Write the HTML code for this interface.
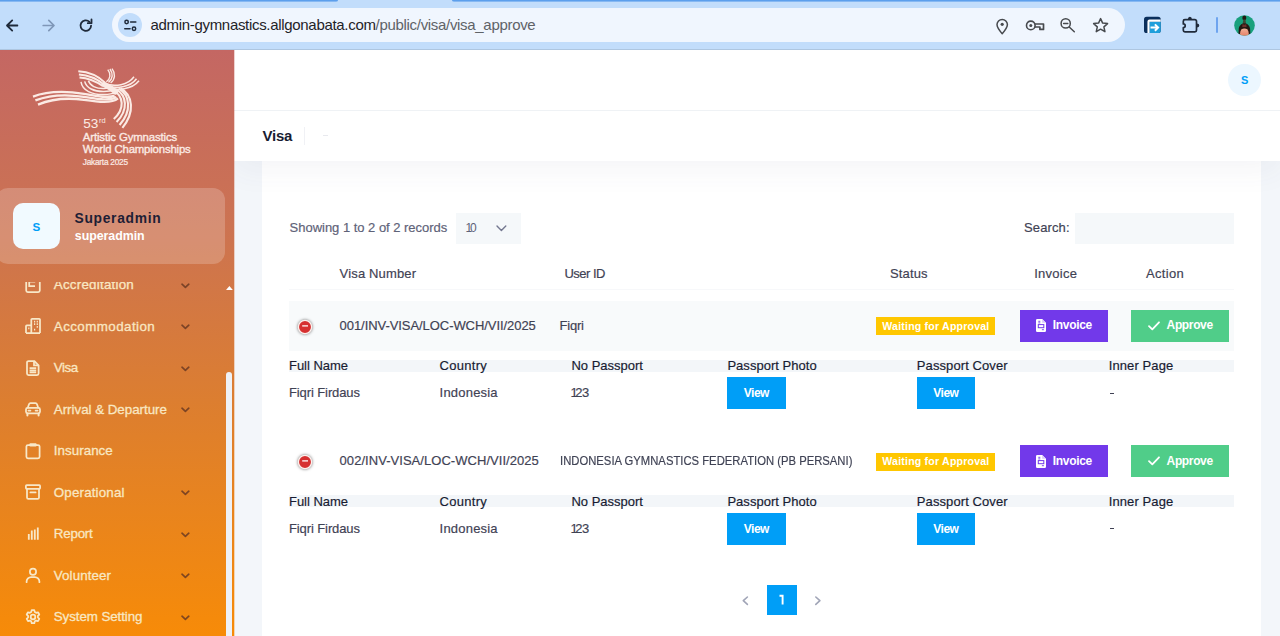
<!DOCTYPE html>
<html lang="en">
<head>
<meta charset="utf-8">
<title>Visa</title>
<style>
html,body{margin:0;padding:0}
body{width:1280px;height:636px;overflow:hidden;position:relative;background:#fff;font-family:"Liberation Sans",sans-serif;color:#181c32}
.a{position:absolute}
.t{position:absolute;white-space:nowrap;line-height:1;font-size:13.4px}
svg{position:absolute;overflow:visible}

/* ---------- browser chrome ---------- */
#chrome{left:0;top:0;width:1280px;height:50px;background:#c2ddfb}
#frameL{left:0;top:0;width:338px;height:2px;background:linear-gradient(180deg,#5c9fec 0,#5c9fec 1px,#86b8f2 1px,#86b8f2 2px);border-radius:0 0 4px 0}
#frameR{left:452px;top:0;width:828px;height:2px;background:linear-gradient(180deg,#5c9fec 0,#5c9fec 1px,#86b8f2 1px,#86b8f2 2px);border-radius:0 0 0 4px}
#chromeline{left:0;top:49px;width:1280px;height:1px;background:#aec6e0}
#pill{left:112.400px;top:8.100px;width:1013px;height:34.400px;border-radius:17.5px;background:#f0f6fe}
#site{left:118px;top:13px;width:24px;height:24px;border-radius:12px;background:#c2ddfb}
#url{left:150.5px;top:17.3px;font-size:15px;color:#1f2328}
#url span{color:#5f6368}
#sep{left:1216px;top:17px;width:2px;height:16px;background:#6ea4ef;border-radius:1px}

/* ---------- sidebar ---------- */
#side{left:0;top:50px;width:234px;height:586px;background:linear-gradient(180deg,#c46763 0%,#cc7352 30%,#dc7e30 60%,#f78b08 100%);overflow:hidden}
#ucard{left:-4px;top:138.200px;width:229.300px;height:75.800px;border-radius:12px;background:rgba(255,255,255,.2)}
#uav{left:13px;top:153.300px;width:47px;height:45.800px;border-radius:10px;background:#f1faff}
.mi{left:53.8px;color:#f9e7c2;font-size:13.4px;-webkit-text-stroke:.3px #f9e7c2}
#sedge{left:234px;top:50px;width:1px;height:586px;background:linear-gradient(180deg,#c46763,#f78b08);opacity:.3;z-index:4}
#thumb{left:226.2px;top:322px;width:5.8px;height:270px;border-radius:3px;background:#eef1f6}

/* ---------- main ---------- */
#header{left:234px;top:50px;width:1046px;height:60px;background:#fff}
#hline{left:234px;top:110px;width:1046px;height:1px;background:#eff2f5}
#tool{left:234px;top:111px;width:1046px;height:50px;background:#fff;box-shadow:0 10px 30px 0 rgba(70,78,105,.055);clip-path:inset(0 0 -60px 0);z-index:2}
#content{left:234px;top:161px;width:1046px;height:475px;background:#f3f6fa}
#card{left:262px;top:161px;width:999px;height:475px;background:#fff}
#hav{left:1228px;top:63.5px;width:32.5px;height:32.5px;border-radius:50%;background:#ecf7ff}
.th{font-size:13px;color:#3f4254}
.td{font-size:13px;color:#3f4254}
.ch{font-size:13px;color:#181c32}
.bb{font-size:12px;font-weight:700;color:#fff}
.bt{font-size:10.6px;font-weight:700;color:#fff}
.badge{width:119px;height:18px;background:#ffc700}
.band{left:289px;width:944.5px;height:12.400px;background:#f3f6f9}
.vbtn{width:58.7px;height:32px;background:#009ef7}
.lg{color:#fbeae4}
.lm{-webkit-text-stroke:.35px #fbeae4}
.n1{margin:0 -2.100px 0 -1px}
#d_num1,#d_num2{letter-spacing:-.4px}
.th,.td,.ch,#showing,#search{-webkit-text-stroke:.18px currentColor}
/*FIT-START*/
#url{letter-spacing:-0.313px}
#l2{letter-spacing:-0.136px}
#l3{letter-spacing:-0.179px}
#l4{letter-spacing:-0.244px}
#u1{letter-spacing:0.696px}
#u2{letter-spacing:-0.048px}
#m1{letter-spacing:0.215px}
#m2{letter-spacing:0.415px}
#m3{letter-spacing:-0.438px}
#m4{letter-spacing:-0.037px}
#m5{letter-spacing:0.023px}
#m6{letter-spacing:0.147px}
#m7{letter-spacing:-0.241px}
#m8{letter-spacing:0.076px}
#m9{letter-spacing:-0.105px}
#title{letter-spacing:-0.198px}
#showing{letter-spacing:-0.022px}
#search{letter-spacing:0.115px}
#h_visa{letter-spacing:0.159px}
#h_user{letter-spacing:-0.510px}
#h_status{letter-spacing:0.168px}
#h_inv{letter-spacing:0.249px}
#h_act{letter-spacing:0.332px}
#r1_no{letter-spacing:-0.063px}
#r1_user{letter-spacing:-0.220px}
#badge1{letter-spacing:0.190px}
#b_inv1{letter-spacing:-0.327px}
#b_app1{letter-spacing:-0.365px}
#c_full1{letter-spacing:-0.031px}
#c_country1{letter-spacing:0.278px}
#c_nopass1{letter-spacing:0.005px}
#c_photo1{letter-spacing:0.031px}
#c_cover1{letter-spacing:0.093px}
#c_inner1{letter-spacing:0.110px}
#d_name1{letter-spacing:-0.104px}
#d_country1{letter-spacing:0.201px}
#b_view1{letter-spacing:-0.514px}
#b_view2{letter-spacing:-0.514px}
#r2_no{letter-spacing:0.044px}
#r2_user{transform:scaleX(0.8674);transform-origin:0 50%}
#badge2{letter-spacing:0.190px}
#b_inv2{letter-spacing:-0.327px}
#b_app2{letter-spacing:-0.365px}
#c_full2{letter-spacing:-0.031px}
#c_country2{letter-spacing:0.278px}
#c_nopass2{letter-spacing:0.005px}
#c_photo2{letter-spacing:0.031px}
#c_cover2{letter-spacing:0.093px}
#c_inner2{letter-spacing:0.110px}
#d_name2{letter-spacing:-0.104px}
#d_country2{letter-spacing:0.201px}
#b_view3{letter-spacing:-0.514px}
#b_view4{letter-spacing:-0.514px}
/*FIT-END*/
</style>
</head>
<body>

<!-- browser chrome -->
<div id="chrome" class="a"></div>
<div id="frameL" class="a"></div>
<div id="frameR" class="a"></div>
<div id="chromeline" class="a"></div>
<div id="pill" class="a"></div>
<div id="site" class="a"></div>
<div id="url" class="t">admin-gymnastics.allgonabata.com<span>/public/visa/visa_approve</span></div>
<div id="sep" class="a"></div>
<svg style="left:0;top:0" width="1280" height="50" viewBox="0 0 1280 50" fill="none" stroke-linecap="round" stroke-linejoin="round">
<!-- back -->
<path d="M17.400 25.500H7.400M12.200 20.400 7 25.500l5.200 5.100" stroke="#1f2a3a" stroke-width="1.8"/>
<!-- forward (disabled) -->
<path d="M43.200 25.500h10.200M48.800 20.400l5.200 5.100-5.200 5.100" stroke="#7f97b8" stroke-width="1.700"/>
<!-- reload -->
<path d="M91.100 25.600a5.300 5.300 0 1 1-1.600-3.800" stroke="#1f2a3a" stroke-width="1.800"/>
<path d="M91.500 19.500v3.700h-3.700" stroke="#1f2a3a" stroke-width="1.800"/>
<!-- site settings (tune) -->
<circle cx="126.6" cy="22" r="1.7" stroke="#1f2a3a" stroke-width="1.5"/>
<path d="M130.6 22h5.2" stroke="#1f2a3a" stroke-width="1.6"/>
<circle cx="134" cy="28.8" r="1.7" stroke="#1f2a3a" stroke-width="1.5"/>
<path d="M124.8 28.8h5.2" stroke="#1f2a3a" stroke-width="1.6"/>
<!-- location pin -->
<path d="M1002.2 33.8c-3.4-3.9-5.2-6.6-5.2-9.2a5.2 5.2 0 0 1 10.4 0c0 2.600-1.800 5.300-5.200 9.200z" stroke="#474a4e" stroke-width="1.5"/>
<circle cx="1002.2" cy="24.300" r="1.600" fill="#474a4e" stroke="none"/>
<!-- key -->
<circle cx="1030.800" cy="25.400" r="4.300" stroke="#474a4e" stroke-width="1.600"/>
<circle cx="1030.800" cy="25.400" r="1.500" fill="#474a4e" stroke="none"/>
<path d="M1035.300 24h8.200v5.400h-3.600v-2.400h-4.600" stroke="#474a4e" stroke-width="1.700"/>
<!-- zoom out -->
<circle cx="1065.700" cy="23.400" r="4.600" stroke="#474a4e" stroke-width="1.500"/>
<path d="M1063.600 23.400h4.200M1069.200 27l5.100 4.700" stroke="#474a4e" stroke-width="1.500"/>
<!-- star -->
<path d="M1100.600 18.600l2.050 4.500 4.900.500-3.650 3.300 1.020 4.800-4.320-2.480-4.320 2.480 1.020-4.800-3.650-3.300 4.900-.500z" stroke="#474a4e" stroke-width="1.500"/>
<!-- extension (blue square) -->
<rect x="1144" y="16.800" width="16.700" height="16.300" rx="2.600" fill="#0b2f5c" stroke="none"/>
<path d="M1149.400 33.100V21.500h11.300V30.500a2.600 2.600 0 0 1-2.600 2.600z" fill="#1f9fdb" stroke="none"/>
<path d="M1148.500 33.100V21.600a1 1 0 0 1 1-1h11.200" stroke="#fff" stroke-width="2.100" stroke-linecap="butt"/>
<path d="M1150.500 27.600h7M1154.900 24.400l3.200 3.200-3.200 3.200" stroke="#fff" stroke-width="2" stroke-linecap="butt" stroke-linejoin="miter"/>
<!-- puzzle -->
<path d="M1184.900 19.700H1194.900a1.600 1.600 0 0 1 1.600 1.600V30.300a1.600 1.600 0 0 1-1.600 1.600H1184.900a1.600 1.600 0 0 1-1.600-1.600V27.700a1.900 1.900 0 0 0 0-3.800V21.300a1.600 1.600 0 0 1 1.600-1.600z" stroke="#1f2a3a" stroke-width="1.700"/>
<path d="M1187.900 19.300a2 2.600 0 0 1 4 0zM1196.900 23.600a2.400 2 0 0 1 0 4z" fill="#1f2a3a" stroke="none"/>
</svg>
<!-- profile avatar -->
<svg style="left:1234px;top:15px" width="21" height="21" viewBox="0 0 21 21">
<defs><clipPath id="pc"><circle cx="10.500" cy="10.500" r="10.300"/></clipPath>
<linearGradient id="sk" x1="0" y1="0" x2="0" y2="1"><stop offset="0" stop-color="#f0b39a"/><stop offset="1" stop-color="#e2705a"/></linearGradient></defs>
<circle cx="10.500" cy="10.500" r="10.300" fill="#18a07d"/>
<g clip-path="url(#pc)">
<ellipse cx="10.300" cy="2.900" rx="2" ry="2.300" fill="#231a14"/>
<path d="M9.300 4.600h2.200l.5 3.800h-3.300z" fill="#3b4a36"/>
<path d="M4.800 13.600c.4-2.800 2.400-5.400 5.600-5.400s5.200 2.600 5.600 5.400l.4 5.400H4.400z" fill="#241813"/>
<path d="M8.600 8.800c.8 1.400 2.800 1.400 3.600 0l.4 3.200H8.200z" fill="#6b2f2a"/>
<ellipse cx="10.400" cy="18.200" rx="4.300" ry="5.200" fill="url(#sk)"/>
<path d="M6.300 14.200c1.400-1.800 6.800-1.800 8.200 0c-1.600-.9-6.600-.9-8.200 0z" fill="#2a1a12"/>
</g>
</svg>
<!--CHROME-END-->

<!-- sidebar -->
<div id="side" class="a">
  <div id="ucard" class="a"></div>
  <div id="uav" class="a"></div>
  <svg id="logo" style="left:0;top:0" width="234" height="130" viewBox="0 50 234 130" fill="none" stroke="#fbeae4" stroke-linecap="butt">
<g stroke-width="2.3">
<path d="M33 96.600 C48 90.800 66 91 84 93.800 C97 95.800 108 98.800 114.600 95.600"/>
<path d="M35.400 100.400 C50.500 94.600 66.500 94.200 84 96.900 C97 98.900 109.500 101.400 116.400 97"/>
<path d="M38 104.600 C52 98.800 67 97.400 84 99.900 C98 101.900 111.500 103.800 118 98.400"/>
</g>
<g stroke-width="2">
<path d="M78.300 71.200 C88 71.800 98 75.800 105 82.600"/>
<path d="M78.900 74.400 C88 75 97 78.600 104 84.400"/>
<path d="M79.500 77.600 C87.500 78.100 95.500 81.200 103 86.200"/>
</g>
<g stroke-width="1.500">
<path d="M81 81.800 C82.400 90.600 92 94.800 104 94.600 C109 94.400 113 93.600 115.600 92.400"/>
<path d="M84.700 81.300 C86.200 88 93.900 91.800 104 91.600 C108.400 91.400 112 90.600 114.400 89.600"/>
<path d="M88.400 80.800 C89.900 85.600 96 88.800 104 88.600 C107.600 88.400 110.400 87.700 112.800 86.800"/>
</g>
<g stroke-width="1.400">
<path d="M106.400 81.800 C110.400 78.800 111.200 74 107.800 69.600"/>
<path d="M108.500 82.400 C112.800 79 113.500 73.600 109.900 69"/>
<path d="M110.600 83 C115.200 79.400 115.800 73.400 112 68.600"/>
</g>
<g stroke-width="1.500">
<path d="M105 83.800 C115 86.800 128 85.400 134 76.800"/>
<path d="M105.200 85.700 C116.400 88.900 130.200 87.500 136.500 78.700"/>
<path d="M105.600 87.600 C117.600 90.900 132 89.700 139 80.800"/>
</g>
<path d="M104.600 84.600 C108 86.400 112 88.600 115.400 91.800" stroke-width="5.400" stroke-linecap="round"/>
<g stroke-width="2.100">
<path d="M113.800 90.600 C123.400 96.200 125.200 108.400 113.800 119"/>
<path d="M116.200 89.400 C126.800 95.600 128.600 109.600 116.600 122"/>
<path d="M118.600 88.600 C130.200 95.200 132 111 119.600 125"/>
<path d="M120.400 88.200 C133.200 95 135 112.400 122.400 127.800"/>
</g>
</svg>
  <div id="l1" class="t lg" style="left:83.300px;top:67px;font-size:13.600px">53<span style="font-size:7.400px;position:relative;top:-5.400px;left:.600px">rd</span></div>
  <div id="l2" class="t lg lm" style="left:82.800px;top:81.800px;font-size:11.400px">Artistic Gymnastics</div>
  <div id="l3" class="t lg lm" style="left:82.800px;top:93.800px;font-size:11.400px">World Championships</div>
  <div id="l4" class="t lg" style="left:82.800px;top:108.400px;font-size:8.300px;-webkit-text-stroke:.2px #fbeae4">Jakarta 2025</div>
  <div id="uS" class="t" style="left:32.400px;top:170.900px;font-size:11.600px;font-weight:700;color:#009ef7">S</div>
  <div id="u1" class="t" style="left:74.600px;top:161.500px;font-size:13.800px;font-weight:700;color:#1e1e35">Superadmin</div>
  <div id="u2" class="t" style="left:74.800px;top:180.100px;font-size:12.400px;font-weight:700;color:#fff">superadmin</div>
  <div id="menu" class="a" style="left:0;top:231.6px;width:226px;height:354.4px;overflow:hidden">
  <svg style="left:24.7px;top:-4.6px" width="16" height="16" viewBox="0 0 16 16"><rect x="1.200" y="1" width="13.600" height="14" rx="1.600" fill="none" stroke="#f8e8c8" stroke-width="1.750"/><path d="M4.200 4.700h6M4.200 4.700v4.300h5.800" stroke="#f8e8c8" stroke-width="1.750" fill="none"/></svg>
  <div id="m1" class="t mi" style="top:-3.4px">Accreditation</div>
  <svg style="left:181.4px;top:1.2px" width="9" height="6" viewBox="0 0 9 6"><path d="M1 1.200 L4.400 4.300 L7.800 1.200" fill="none" stroke="#6b3a22" stroke-opacity=".85" stroke-width="1.700" stroke-linecap="round" stroke-linejoin="round"/></svg>
  <svg style="left:24.7px;top:36.9px" width="16" height="16" viewBox="0 0 16 16"><path d="M6.3 15V1.6a.8.8 0 0 1 .8-.8h7.1a.8.8 0 0 1 .8.8V15M1 15V8.2a.8.8 0 0 1 .8-.8h4.5M1 15h14" fill="none" stroke="#f8e8c8" stroke-width="1.750" stroke-linejoin="round"/><path d="M9 3.6h1.2M11.7 3.6h1.2M9 6.2h1.2M11.7 6.2h1.2M11.7 8.8h1.2M3.2 10.4h1.2M9 11.6h1.2" stroke="#f8e8c8" stroke-width="1.750" fill="none"/></svg>
  <div id="m2" class="t mi" style="top:38.1px">Accommodation</div>
  <svg style="left:181.4px;top:42.7px" width="9" height="6" viewBox="0 0 9 6"><path d="M1 1.200 L4.400 4.300 L7.800 1.200" fill="none" stroke="#6b3a22" stroke-opacity=".85" stroke-width="1.700" stroke-linecap="round" stroke-linejoin="round"/></svg>
  <svg style="left:24.7px;top:78.4px" width="16" height="16" viewBox="0 0 16 16"><path d="M3.6 1h5.6L13.6 5.3V13.4a1.6 1.6 0 0 1-1.6 1.6H3.6A1.6 1.6 0 0 1 2 13.4V2.6A1.6 1.6 0 0 1 3.6 1z" fill="none" stroke="#f8e8c8" stroke-width="1.750" stroke-linejoin="round"/><path d="M9 1.2V5.4h4.4" fill="none" stroke="#f8e8c8" stroke-width="1.750"/><path d="M4.6 8.2h6.6M4.6 10.4h6.6M4.6 12.4h6.6" stroke="#f8e8c8" stroke-width="1.750" fill="none"/></svg>
  <div id="m3" class="t mi" style="top:79.6px">Visa</div>
  <svg style="left:181.4px;top:84.2px" width="9" height="6" viewBox="0 0 9 6"><path d="M1 1.200 L4.400 4.300 L7.800 1.200" fill="none" stroke="#6b3a22" stroke-opacity=".85" stroke-width="1.700" stroke-linecap="round" stroke-linejoin="round"/></svg>
  <svg style="left:24.7px;top:119.9px" width="16" height="16" viewBox="0 0 16 16"><path d="M2.6 7.2 4 3.2A1.6 1.6 0 0 1 5.5 2.1h5a1.6 1.6 0 0 1 1.5 1.1l1.4 4" fill="none" stroke="#f8e8c8" stroke-width="1.750" stroke-linejoin="round"/><rect x="1" y="6.9" width="14" height="5.4" rx="1.6" fill="none" stroke="#f8e8c8" stroke-width="1.750"/><path d="M2.4 12.4v2.2M13.6 12.4v2.2" stroke="#f8e8c8" stroke-width="2" stroke-linecap="round"/><path d="M3.4 9.6h2M10.6 9.6h2" stroke="#f8e8c8" stroke-width="1.750" stroke-linecap="round"/></svg>
  <div id="m4" class="t mi" style="top:121.1px">Arrival &amp; Departure</div>
  <svg style="left:181.4px;top:125.7px" width="9" height="6" viewBox="0 0 9 6"><path d="M1 1.200 L4.400 4.300 L7.800 1.200" fill="none" stroke="#6b3a22" stroke-opacity=".85" stroke-width="1.700" stroke-linecap="round" stroke-linejoin="round"/></svg>
  <svg style="left:24.7px;top:161.4px" width="16" height="16" viewBox="0 0 16 16"><rect x="1.400" y="2" width="13.200" height="13.400" rx="1.600" fill="none" stroke="#f8e8c8" stroke-width="1.750"/><rect x="4.400" y=".200" width="7.200" height="3.400" rx="1" fill="#f8e8c8"/></svg>
  <div id="m5" class="t mi" style="top:162.6px">Insurance</div>
  <svg style="left:24.7px;top:202.9px" width="16" height="16" viewBox="0 0 16 16"><rect x="0.9" y="1.2" width="14.2" height="3.6" rx="0.8" fill="none" stroke="#f8e8c8" stroke-width="1.750"/><path d="M2 5v8.4a1.4 1.4 0 0 0 1.4 1.4h9.2a1.4 1.4 0 0 0 1.4-1.4V5" fill="none" stroke="#f8e8c8" stroke-width="1.750"/><path d="M5.4 8.4h5.2" stroke="#f8e8c8" stroke-width="1.750" stroke-linecap="round"/></svg>
  <div id="m6" class="t mi" style="top:204.1px">Operational</div>
  <svg style="left:181.4px;top:208.7px" width="9" height="6" viewBox="0 0 9 6"><path d="M1 1.200 L4.400 4.300 L7.800 1.200" fill="none" stroke="#6b3a22" stroke-opacity=".85" stroke-width="1.700" stroke-linecap="round" stroke-linejoin="round"/></svg>
  <svg style="left:24.7px;top:244.4px" width="16" height="16" viewBox="0 0 16 16"><path d="M3.800 13.700V8.100M6.800 13.700V4.400M9.800 13.700V3.500M12.800 13.700V1.500" stroke="#f8e8c8" stroke-width="1.800" fill="none"/></svg>
  <div id="m7" class="t mi" style="top:245.6px">Report</div>
  <svg style="left:181.4px;top:250.2px" width="9" height="6" viewBox="0 0 9 6"><path d="M1 1.200 L4.400 4.300 L7.800 1.200" fill="none" stroke="#6b3a22" stroke-opacity=".85" stroke-width="1.700" stroke-linecap="round" stroke-linejoin="round"/></svg>
  <svg style="left:24.7px;top:285.9px" width="16" height="16" viewBox="0 0 16 16"><circle cx="8" cy="4.7" r="3.1" fill="none" stroke="#f8e8c8" stroke-width="1.750"/><path d="M1.6 15.2v-.6a4.6 4.6 0 0 1 4.6-4.6h3.6a4.6 4.6 0 0 1 4.6 4.6v.6" fill="none" stroke="#f8e8c8" stroke-width="1.750" stroke-linecap="round"/></svg>
  <div id="m8" class="t mi" style="top:287.1px">Volunteer</div>
  <svg style="left:181.4px;top:291.7px" width="9" height="6" viewBox="0 0 9 6"><path d="M1 1.200 L4.400 4.300 L7.800 1.200" fill="none" stroke="#6b3a22" stroke-opacity=".85" stroke-width="1.700" stroke-linecap="round" stroke-linejoin="round"/></svg>
  <svg style="left:24.7px;top:327.4px" width="16" height="16" viewBox="0 0 16 16"><circle cx="8" cy="8" r="2.3" fill="none" stroke="#f8e8c8" stroke-width="1.750"/><path d="M6.7 1.2h2.6l.5 1.9 1.3.75 1.9-.55 1.3 2.25-1.4 1.4v1.5l1.4 1.4-1.3 2.25-1.9-.55-1.3.75-.5 1.9H6.7l-.5-1.9-1.3-.75-1.9.55-1.3-2.25 1.4-1.4v-1.5l-1.4-1.4 1.3-2.25 1.9.55 1.3-.75z" fill="none" stroke="#f8e8c8" stroke-width="1.750" stroke-linejoin="round"/></svg>
  <div id="m9" class="t mi" style="top:328.6px">System Setting</div>
  <svg style="left:181.4px;top:333.2px" width="9" height="6" viewBox="0 0 9 6"><path d="M1 1.200 L4.400 4.300 L7.800 1.200" fill="none" stroke="#6b3a22" stroke-opacity=".85" stroke-width="1.700" stroke-linecap="round" stroke-linejoin="round"/></svg>
  </div>
  <svg style="left:225.6px;top:236px" width="7" height="4" viewBox="0 0 7 4"><path d="M0 4 L3.4 0 L6.8 4z" fill="#fff"/></svg>
  <!--SIDE-END-->
  <div id="thumb" class="a"></div>
</div>

<div id="sedge" class="a"></div>

<!-- main -->
<div id="header" class="a"></div>
<div id="hline" class="a"></div>
<div id="content" class="a"></div>
<div id="card" class="a"></div>
<div id="tool" class="a"></div>
<div id="hav" class="a"></div>
<!-- header avatar letter -->
<div id="havS" class="t" style="left:1240.900px;top:74.500px;font-size:11px;font-weight:700;color:#009ef7">S</div>

<!-- toolbar -->
<div id="title" class="t" style="left:262.4px;top:127.800px;font-size:15px;font-weight:700;color:#181c32;z-index:3">Visa</div>
<div class="a" style="left:304px;top:127px;width:1px;height:18px;background:#f0f1f5;z-index:3"></div>
<div class="a" style="left:323px;top:135px;width:4.600px;height:1.400px;background:#e8e9ee;z-index:3"></div>

<!-- controls -->
<div id="showing" class="t" style="left:289.6px;top:221px;font-size:13px;color:#5e6278">Showing 1 to 2 of 2 records</div>
<div class="a" style="left:456px;top:212.5px;width:65px;height:31.5px;background:#f5f8fa"></div>
<div id="ten" class="t" style="left:466.500px;top:222px;font-size:12px;color:#5e6278"><span class="n1">1</span>0</div>
<svg style="left:495.800px;top:224.600px" width="11" height="7" viewBox="0 0 11 7"><path d="M1 1 L5.400 5.400 L9.800 1" fill="none" stroke="#747890" stroke-width="1.400" stroke-linecap="round" stroke-linejoin="round"/></svg>
<div id="search" class="t" style="left:1024px;top:221px;font-size:13px;color:#3f4254">Search:</div>
<div class="a" style="left:1075px;top:212.5px;width:158.5px;height:31.5px;background:#f5f8fa"></div>

<!-- table header -->
<div id="h_visa" class="t th" style="left:339.6px;top:267px">Visa Number</div>
<div id="h_user" class="t th" style="left:564.4px;top:267px">User ID</div>
<div id="h_status" class="t th" style="left:889.9px;top:267px">Status</div>
<div id="h_inv" class="t th" style="left:1034.2px;top:267px">Invoice</div>
<div id="h_act" class="t th" style="left:1146px;top:267px">Action</div>
<div class="a" style="left:289px;top:289px;width:944.5px;height:1px;background:#f7f8fa"></div>

<!-- row 1 -->
<div class="a" style="left:289px;top:301px;width:944.5px;height:49.6px;background:#f8fafb"></div>
<svg style="left:294.8px;top:316.6px;filter:drop-shadow(0 0 1.400px rgba(68,68,68,.750))" width="20" height="20" viewBox="0 0 20 20"><circle cx="10" cy="10" r="6.600" fill="#d63030" stroke="#fdf1ee" stroke-width="1.300"/><path d="M7.200 8.900h5.800" stroke="#fff" stroke-width="1.250"/></svg>
<div id="r1_no" class="t td" style="left:339.6px;top:318.7px">001/INV-VISA/LOC-WCH/VII/2025</div>
<div id="r1_user" class="t td" style="left:559.6px;top:318.7px">Fiqri</div>
<div class="a badge" style="left:876px;top:317px"></div>
<div id="badge1" class="t bt" style="left:882.3px;top:320.5px">Waiting for Approval</div>
<div class="a" style="left:1020px;top:309.8px;width:88px;height:32px;background:#7239ea"></div>
<svg style="left:1036px;top:319px" width="10" height="13" viewBox="0 0 10 13"><path d="M1.3 0h4.900L10 3.800V11.700A1.300 1.300 0 0 1 8.700 13H1.300A1.300 1.300 0 0 1 0 11.700V1.300A1.300 1.300 0 0 1 1.300 0z" fill="#fff"/><path d="M6.200 0v3.800H10" fill="#d9c8fb"/><rect x="2.300" y="5.600" width="5.500" height="3.100" fill="none" stroke="#7239ea" stroke-width="1"/><path d="M2.300 2.300h2M2.300 3.900h2M5.900 10.700h2" stroke="#7239ea" stroke-width=".9"/></svg>
<div id="b_inv1" class="t bb" style="left:1052.8px;top:319.3px">Invoice</div>
<div class="a" style="left:1131px;top:309.8px;width:98.3px;height:32px;background:#50cd89"></div>
<svg style="left:1147.5px;top:320.8px" width="12" height="10" viewBox="0 0 12 10"><path d="M1 5.200 L4.300 8.300 L11 1.300" fill="none" stroke="#fff" stroke-width="1.800" stroke-linecap="round" stroke-linejoin="round"/></svg>
<div id="b_app1" class="t bb" style="left:1166.6px;top:319.3px">Approve</div>
<!-- row 1 child -->
<div class="a band" style="top:359.600px"></div>
<div id="c_full1" class="t ch" style="left:289px;top:359px">Full Name</div>
<div id="c_country1" class="t ch" style="left:439.6px;top:359px">Country</div>
<div id="c_nopass1" class="t ch" style="left:571.4px;top:359px">No Passport</div>
<div id="c_photo1" class="t ch" style="left:727.4px;top:359px">Passport Photo</div>
<div id="c_cover1" class="t ch" style="left:916.8px;top:359px">Passport Cover</div>
<div id="c_inner1" class="t ch" style="left:1108.7px;top:359px">Inner Page</div>
<div id="d_name1" class="t td" style="left:289px;top:386px">Fiqri Firdaus</div>
<div id="d_country1" class="t td" style="left:439.6px;top:386px">Indonesia</div>
<div id="d_num1" class="t td" style="left:571.4px;top:386px"><span class="n1">1</span>23</div>
<div class="a vbtn" style="left:727.3px;top:377px"></div>
<div id="b_view1" class="t bb" style="left:743.8px;top:387.1px">View</div>
<div class="a vbtn" style="left:916.8px;top:377px"></div>
<div id="b_view2" class="t bb" style="left:933.3px;top:387.1px">View</div>
<div class="a" style="left:1109.5px;top:392.5px;width:4.5px;height:1.2px;background:#3f4254"></div>

<!-- row 2 -->
<svg style="left:294.8px;top:452.1px;filter:drop-shadow(0 0 1.400px rgba(68,68,68,.750))" width="20" height="20" viewBox="0 0 20 20"><circle cx="10" cy="10" r="6.600" fill="#d63030" stroke="#fdf1ee" stroke-width="1.300"/><path d="M7.200 8.900h5.800" stroke="#fff" stroke-width="1.250"/></svg>
<div id="r2_no" class="t td" style="left:339.6px;top:454.2px">002/INV-VISA/LOC-WCH/VII/2025</div>
<div id="r2_user" class="t td" style="left:559.6px;top:454.2px">INDONESIA GYMNASTICS FEDERATION (PB PERSANI)</div>
<div class="a badge" style="left:876px;top:452.5px"></div>
<div id="badge2" class="t bt" style="left:882.3px;top:456px">Waiting for Approval</div>
<div class="a" style="left:1020px;top:445.3px;width:88px;height:32px;background:#7239ea"></div>
<svg style="left:1036px;top:454.5px" width="10" height="13" viewBox="0 0 10 13"><path d="M1.3 0h4.900L10 3.800V11.700A1.300 1.300 0 0 1 8.700 13H1.300A1.300 1.300 0 0 1 0 11.700V1.300A1.300 1.300 0 0 1 1.300 0z" fill="#fff"/><path d="M6.200 0v3.800H10" fill="#d9c8fb"/><rect x="2.300" y="5.600" width="5.500" height="3.100" fill="none" stroke="#7239ea" stroke-width="1"/><path d="M2.300 2.300h2M2.300 3.900h2M5.900 10.700h2" stroke="#7239ea" stroke-width=".9"/></svg>
<div id="b_inv2" class="t bb" style="left:1052.8px;top:454.8px">Invoice</div>
<div class="a" style="left:1131px;top:445.3px;width:98.3px;height:32px;background:#50cd89"></div>
<svg style="left:1147.5px;top:456.3px" width="12" height="10" viewBox="0 0 12 10"><path d="M1 5.200 L4.300 8.300 L11 1.300" fill="none" stroke="#fff" stroke-width="1.800" stroke-linecap="round" stroke-linejoin="round"/></svg>
<div id="b_app2" class="t bb" style="left:1166.6px;top:454.8px">Approve</div>
<!-- row 2 child -->
<div class="a band" style="top:495.100px"></div>
<div id="c_full2" class="t ch" style="left:289px;top:494.5px">Full Name</div>
<div id="c_country2" class="t ch" style="left:439.6px;top:494.5px">Country</div>
<div id="c_nopass2" class="t ch" style="left:571.4px;top:494.5px">No Passport</div>
<div id="c_photo2" class="t ch" style="left:727.4px;top:494.5px">Passport Photo</div>
<div id="c_cover2" class="t ch" style="left:916.8px;top:494.5px">Passport Cover</div>
<div id="c_inner2" class="t ch" style="left:1108.7px;top:494.5px">Inner Page</div>
<div id="d_name2" class="t td" style="left:289px;top:521.5px">Fiqri Firdaus</div>
<div id="d_country2" class="t td" style="left:439.6px;top:521.5px">Indonesia</div>
<div id="d_num2" class="t td" style="left:571.4px;top:521.5px"><span class="n1">1</span>23</div>
<div class="a vbtn" style="left:727.3px;top:512.5px"></div>
<div id="b_view3" class="t bb" style="left:743.8px;top:522.6px">View</div>
<div class="a vbtn" style="left:916.8px;top:512.5px"></div>
<div id="b_view4" class="t bb" style="left:933.3px;top:522.6px">View</div>
<div class="a" style="left:1109.5px;top:528px;width:4.5px;height:1.2px;background:#3f4254"></div>

<!-- pagination -->
<svg style="left:0;top:0" width="1280" height="636" viewBox="0 0 1280 636" fill="none"><path d="M747.400 597 L743.300 600.700 L747.400 604.400" stroke="#a1a5b7" stroke-width="1.600" stroke-linecap="round" stroke-linejoin="round"/><path d="M815.800 597 L819.900 600.700 L815.800 604.400" stroke="#a1a5b7" stroke-width="1.600" stroke-linecap="round" stroke-linejoin="round"/></svg>
<div class="a" style="left:766.600px;top:585.400px;width:30.200px;height:30.100px;background:#009ef7"></div>
<svg style="left:779px;top:594px" width="6" height="11" viewBox="0 0 6 11"><path d="M.5 1.700H3.600V10.500" fill="none" stroke="#fff" stroke-width="1.900"/></svg>
<!--MAIN-END-->

</body>
</html>
